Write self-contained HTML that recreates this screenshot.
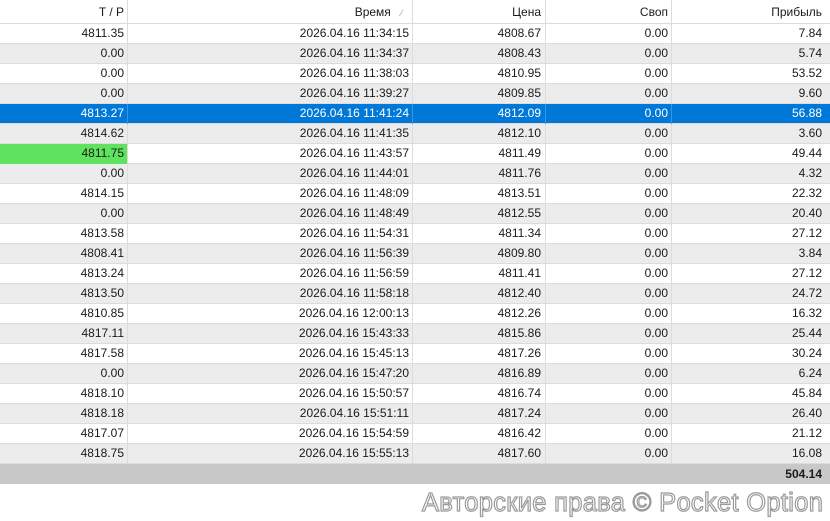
<!DOCTYPE html>
<html><head><meta charset="utf-8"><style>
*{margin:0;padding:0;box-sizing:border-box}
body{width:830px;height:521px;background:#fff;font-family:"Liberation Sans",sans-serif;font-size:12px;color:#1a1a1a;position:relative;overflow:hidden}
.r{position:absolute;left:0;width:830px;height:20px;border-bottom:1px solid #dcdcdc}
.c{position:absolute;top:0;height:20px;line-height:19px;text-align:right;padding-right:3px;border-right:1px solid #dcdcdc}
.c1{left:0;width:128px}.c2{left:128px;width:285px}.c3{left:413px;width:133px;padding-right:4px}.c4{left:546px;width:126px}.c5{left:672px;width:158px;border-right:none;padding-right:8px}
.g{background:#ececec}
.s{background:#0078d7;color:#fff}
.s .c{border-right-color:#3a94de}
.h{top:0;height:24px}
.h .c{height:24px;line-height:24px}
.wm{position:absolute;left:422px;top:489px;font-size:25.5px;color:#fff;-webkit-text-stroke:1.2px #9a9a9a;letter-spacing:0.3px;white-space:nowrap}
</style></head><body>
<div class="r h"><div class="c c1">T / P</div><div class="c c2">Время &nbsp;&nbsp;<span style="color:#999;font-size:9px">⁄</span>&nbsp;&nbsp;</div><div class="c c3">Цена</div><div class="c c4">Своп</div><div class="c c5">Прибыль</div></div>
<div id="rows"></div>
<div style="position:absolute;left:0;top:464px;width:830px;height:20px;background:#c8c8c8;text-align:right;padding-right:8px;line-height:20px;font-weight:bold">504.14</div>
<div class="wm">Авторские права © Pocket Option</div>
<script>
var d=[["4811.35","11:34:15","4808.67","7.84"],["0.00","11:34:37","4808.43","5.74"],["0.00","11:38:03","4810.95","53.52"],["0.00","11:39:27","4809.85","9.60"],["4813.27","11:41:24","4812.09","56.88"],["4814.62","11:41:35","4812.10","3.60"],["4811.75","11:43:57","4811.49","49.44"],["0.00","11:44:01","4811.76","4.32"],["4814.15","11:48:09","4813.51","22.32"],["0.00","11:48:49","4812.55","20.40"],["4813.58","11:54:31","4811.34","27.12"],["4808.41","11:56:39","4809.80","3.84"],["4813.24","11:56:59","4811.41","27.12"],["4813.50","11:58:18","4812.40","24.72"],["4810.85","12:00:13","4812.26","16.32"],["4817.11","15:43:33","4815.86","25.44"],["4817.58","15:45:13","4817.26","30.24"],["0.00","15:47:20","4816.89","6.24"],["4818.10","15:50:57","4816.74","45.84"],["4818.18","15:51:11","4817.24","26.40"],["4817.07","15:54:59","4816.42","21.12"],["4818.75","15:55:13","4817.60","16.08"]];
var h="";d.forEach(function(r,i){var cl="r"+(i==4?" s":(i%2?" g":""));var g=i==6?' style="background:#5fe35f"':'';
h+='<div class="'+cl+'" style="top:'+(24+i*20)+'px"><div class="c c1"'+g+'>'+r[0]+'</div><div class="c c2">2026.04.16 '+r[1]+'</div><div class="c c3">'+r[2]+'</div><div class="c c4">0.00</div><div class="c c5">'+r[3]+'</div></div>';});
document.getElementById("rows").innerHTML=h;
</script>
</body></html>
